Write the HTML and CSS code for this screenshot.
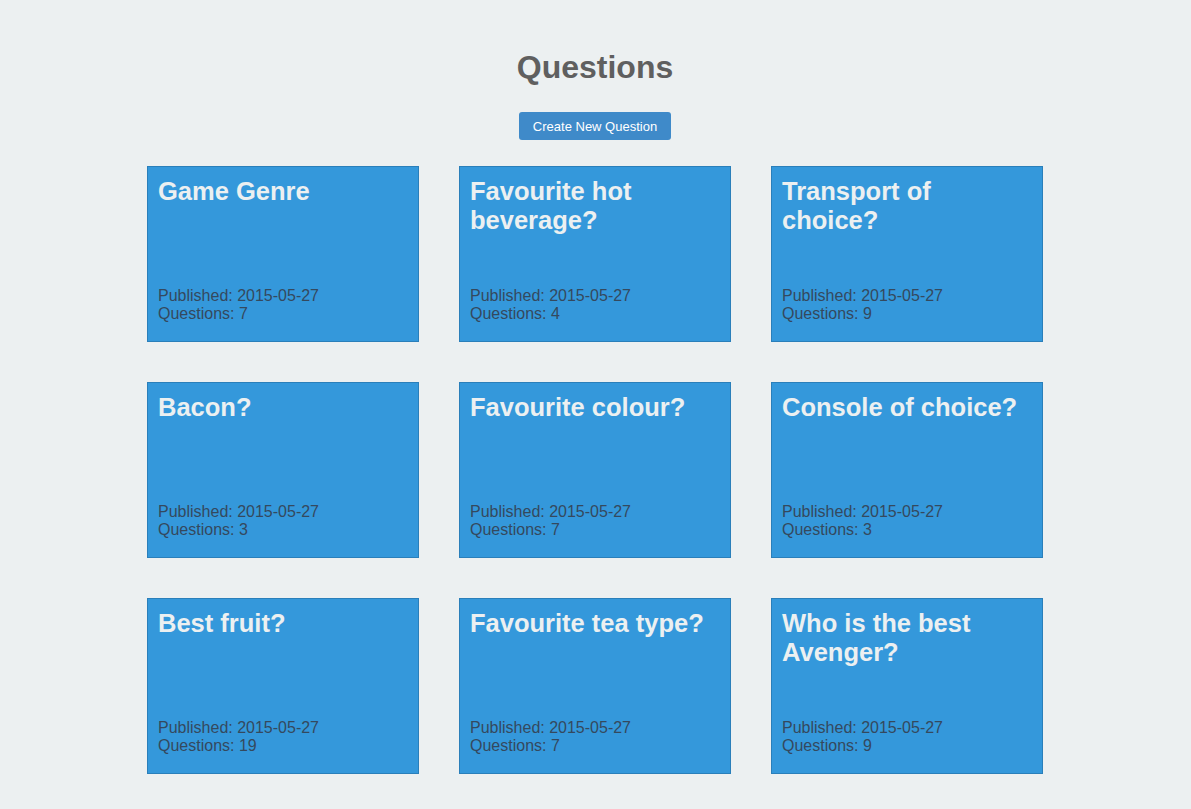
FILE: index.html
```html
<!DOCTYPE html>
<html>
<head>
<meta charset="utf-8">
<title>Questions</title>
<link rel="stylesheet" href="styles.css">
</head>
<body>
<main class="page">
  <h1 class="page-title">Questions</h1>
  <div class="actions"><button class="btn">Create New Question</button></div>
  <div class="grid">
    <div class="card"><h2 class="card-title">Game Genre</h2><div class="meta">Published: 2015-05-27<br>Questions: 7</div></div>
    <div class="card"><h2 class="card-title">Favourite hot beverage?</h2><div class="meta">Published: 2015-05-27<br>Questions: 4</div></div>
    <div class="card"><h2 class="card-title">Transport of choice?</h2><div class="meta">Published: 2015-05-27<br>Questions: 9</div></div>
    <div class="card"><h2 class="card-title">Bacon?</h2><div class="meta">Published: 2015-05-27<br>Questions: 3</div></div>
    <div class="card"><h2 class="card-title">Favourite colour?</h2><div class="meta">Published: 2015-05-27<br>Questions: 7</div></div>
    <div class="card"><h2 class="card-title">Console of choice?</h2><div class="meta">Published: 2015-05-27<br>Questions: 3</div></div>
    <div class="card"><h2 class="card-title">Best fruit?</h2><div class="meta">Published: 2015-05-27<br>Questions: 19</div></div>
    <div class="card"><h2 class="card-title">Favourite tea type?</h2><div class="meta">Published: 2015-05-27<br>Questions: 7</div></div>
    <div class="card"><h2 class="card-title">Who is the best Avenger?</h2><div class="meta">Published: 2015-05-27<br>Questions: 9</div></div>
  </div>
</main>
</body>
</html>
```

FILE: styles.css
```css
html, body {
  margin: 0;
  padding: 0;
  background: #ecf0f1;
  font-family: "Liberation Sans", Arial, sans-serif;
}
.page {
  padding-top: 48px;
  padding-right: 1px;
  display: flex;
  flex-direction: column;
  align-items: center;
}
.page-title {
  margin: 0;
  font-size: 32px;
  line-height: 38px;
  font-weight: bold;
  color: #5f5f5f;
}
.actions {
  margin-top: 26px;
}
.btn {
  font-family: "Liberation Sans", Arial, sans-serif;
  font-size: 13px;
  color: #ffffff;
  background: #3f8ac9;
  border: none;
  border-radius: 3px;
  height: 28px;
  padding: 0 14px;
  cursor: pointer;
}
.grid {
  margin-top: 26px;
  display: grid;
  grid-template-columns: repeat(3, 272px);
  column-gap: 40px;
  row-gap: 40px;
}
.card {
  box-sizing: border-box;
  height: 176px;
  background: #3498db;
  border: 1px solid #2a7fba;
  padding: 10px 10px 18px 10px;
  display: flex;
  flex-direction: column;
  justify-content: space-between;
}
.card-title {
  margin: 0;
  font-size: 25.5px;
  line-height: 29px;
  font-weight: bold;
  color: #ecf0f1;
}
.meta {
  font-size: 16px;
  line-height: 18px;
  color: #34495e;
}
```
